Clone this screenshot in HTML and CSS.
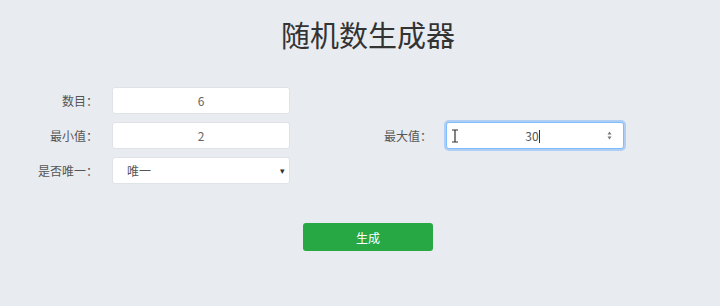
FILE: index.html
```html
<!DOCTYPE html>
<html lang="zh-CN">
<head>
    <meta charset="UTF-8">
    <title>随机数生成器</title>
    <link rel="stylesheet" href="styles.css">
</head>
<body>
    <h1 class="title">随机数生成器</h1>

    <div class="form-grid">
        <label class="label">数目：</label>
        <input class="field" type="text" value="6">
        <span></span>
        <span></span>

        <label class="label">最小值：</label>
        <input class="field" type="text" value="2">
        <label class="label">最大值：</label>
        <div class="field focused">
            <svg class="ibeam" width="8" height="14" viewBox="0 0 8 14">
                <path d="M1 1h6M4 1v12M1 13h6" stroke="#333" stroke-width="1.2" fill="none"/>
            </svg>
            <span class="value">30<span class="caret"></span></span>
            <svg class="spin" width="7" height="11" viewBox="0 0 7 11">
                <path d="M3.5 1.5L5.5 4.5H1.5z M3.5 9.5L5.5 6.5H1.5z" fill="#777"/>
            </svg>
        </div>

        <label class="label">是否唯一：</label>
        <div class="field select">
            <span>唯一</span>
            <span class="arrow">▾</span>
        </div>
        <span></span>
        <span></span>
    </div>

    <div class="actions">
        <button class="btn-generate">生成</button>
    </div>
</body>
</html>
```

FILE: styles.css
```css
body {
    margin: 0;
    background-color: #e8ebef;
    font-family: "Noto Sans CJK SC", "Noto Sans", sans-serif;
    color: #555;
    font-size: 12px;
}

.title {
    margin: 0;
    padding: 14px 0 0 16px;
    text-align: center;
    font-size: 29px;
    font-weight: normal;
    color: #333;
    line-height: 40px;
}

.form-grid {
    display: grid;
    grid-template-columns: 98px 178px 128px 178px;
    grid-auto-rows: 27px;
    column-gap: 14px;
    row-gap: 8px;
    margin-top: 33px;
}

.label {
    display: flex;
    align-items: center;
    justify-content: flex-end;
    color: #555;
}

.field {
    box-sizing: border-box;
    height: 27px;
    margin: 0;
    border: 1px solid #dfe2e6;
    border-radius: 3px;
    background-color: #fff;
    font-family: inherit;
    font-size: 12px;
    color: #666;
    text-align: center;
    outline: none;
}

.focused {
    display: flex;
    align-items: center;
    padding: 0 10px 0 4px;
    border-color: #80bdff;
    box-shadow: 0 0 0 2px rgba(0, 123, 255, 0.25);
}

.focused .value {
    flex: 1;
    text-align: center;
    color: #555;
}

.caret {
    display: inline-block;
    width: 1px;
    height: 13px;
    background-color: #333;
    vertical-align: -2px;
}

.select {
    display: flex;
    align-items: center;
    justify-content: space-between;
    padding: 0 4px 0 14px;
    text-align: left;
    color: #555;
}

.arrow {
    font-size: 9px;
    color: #333;
}

.actions {
    display: flex;
    justify-content: center;
    padding-left: 16px;
    margin-top: 39px;
}

.btn-generate {
    width: 130px;
    height: 28px;
    border: none;
    border-radius: 3px;
    background-color: #28a745;
    color: #fff;
    font-family: inherit;
    font-size: 12px;
}
```
